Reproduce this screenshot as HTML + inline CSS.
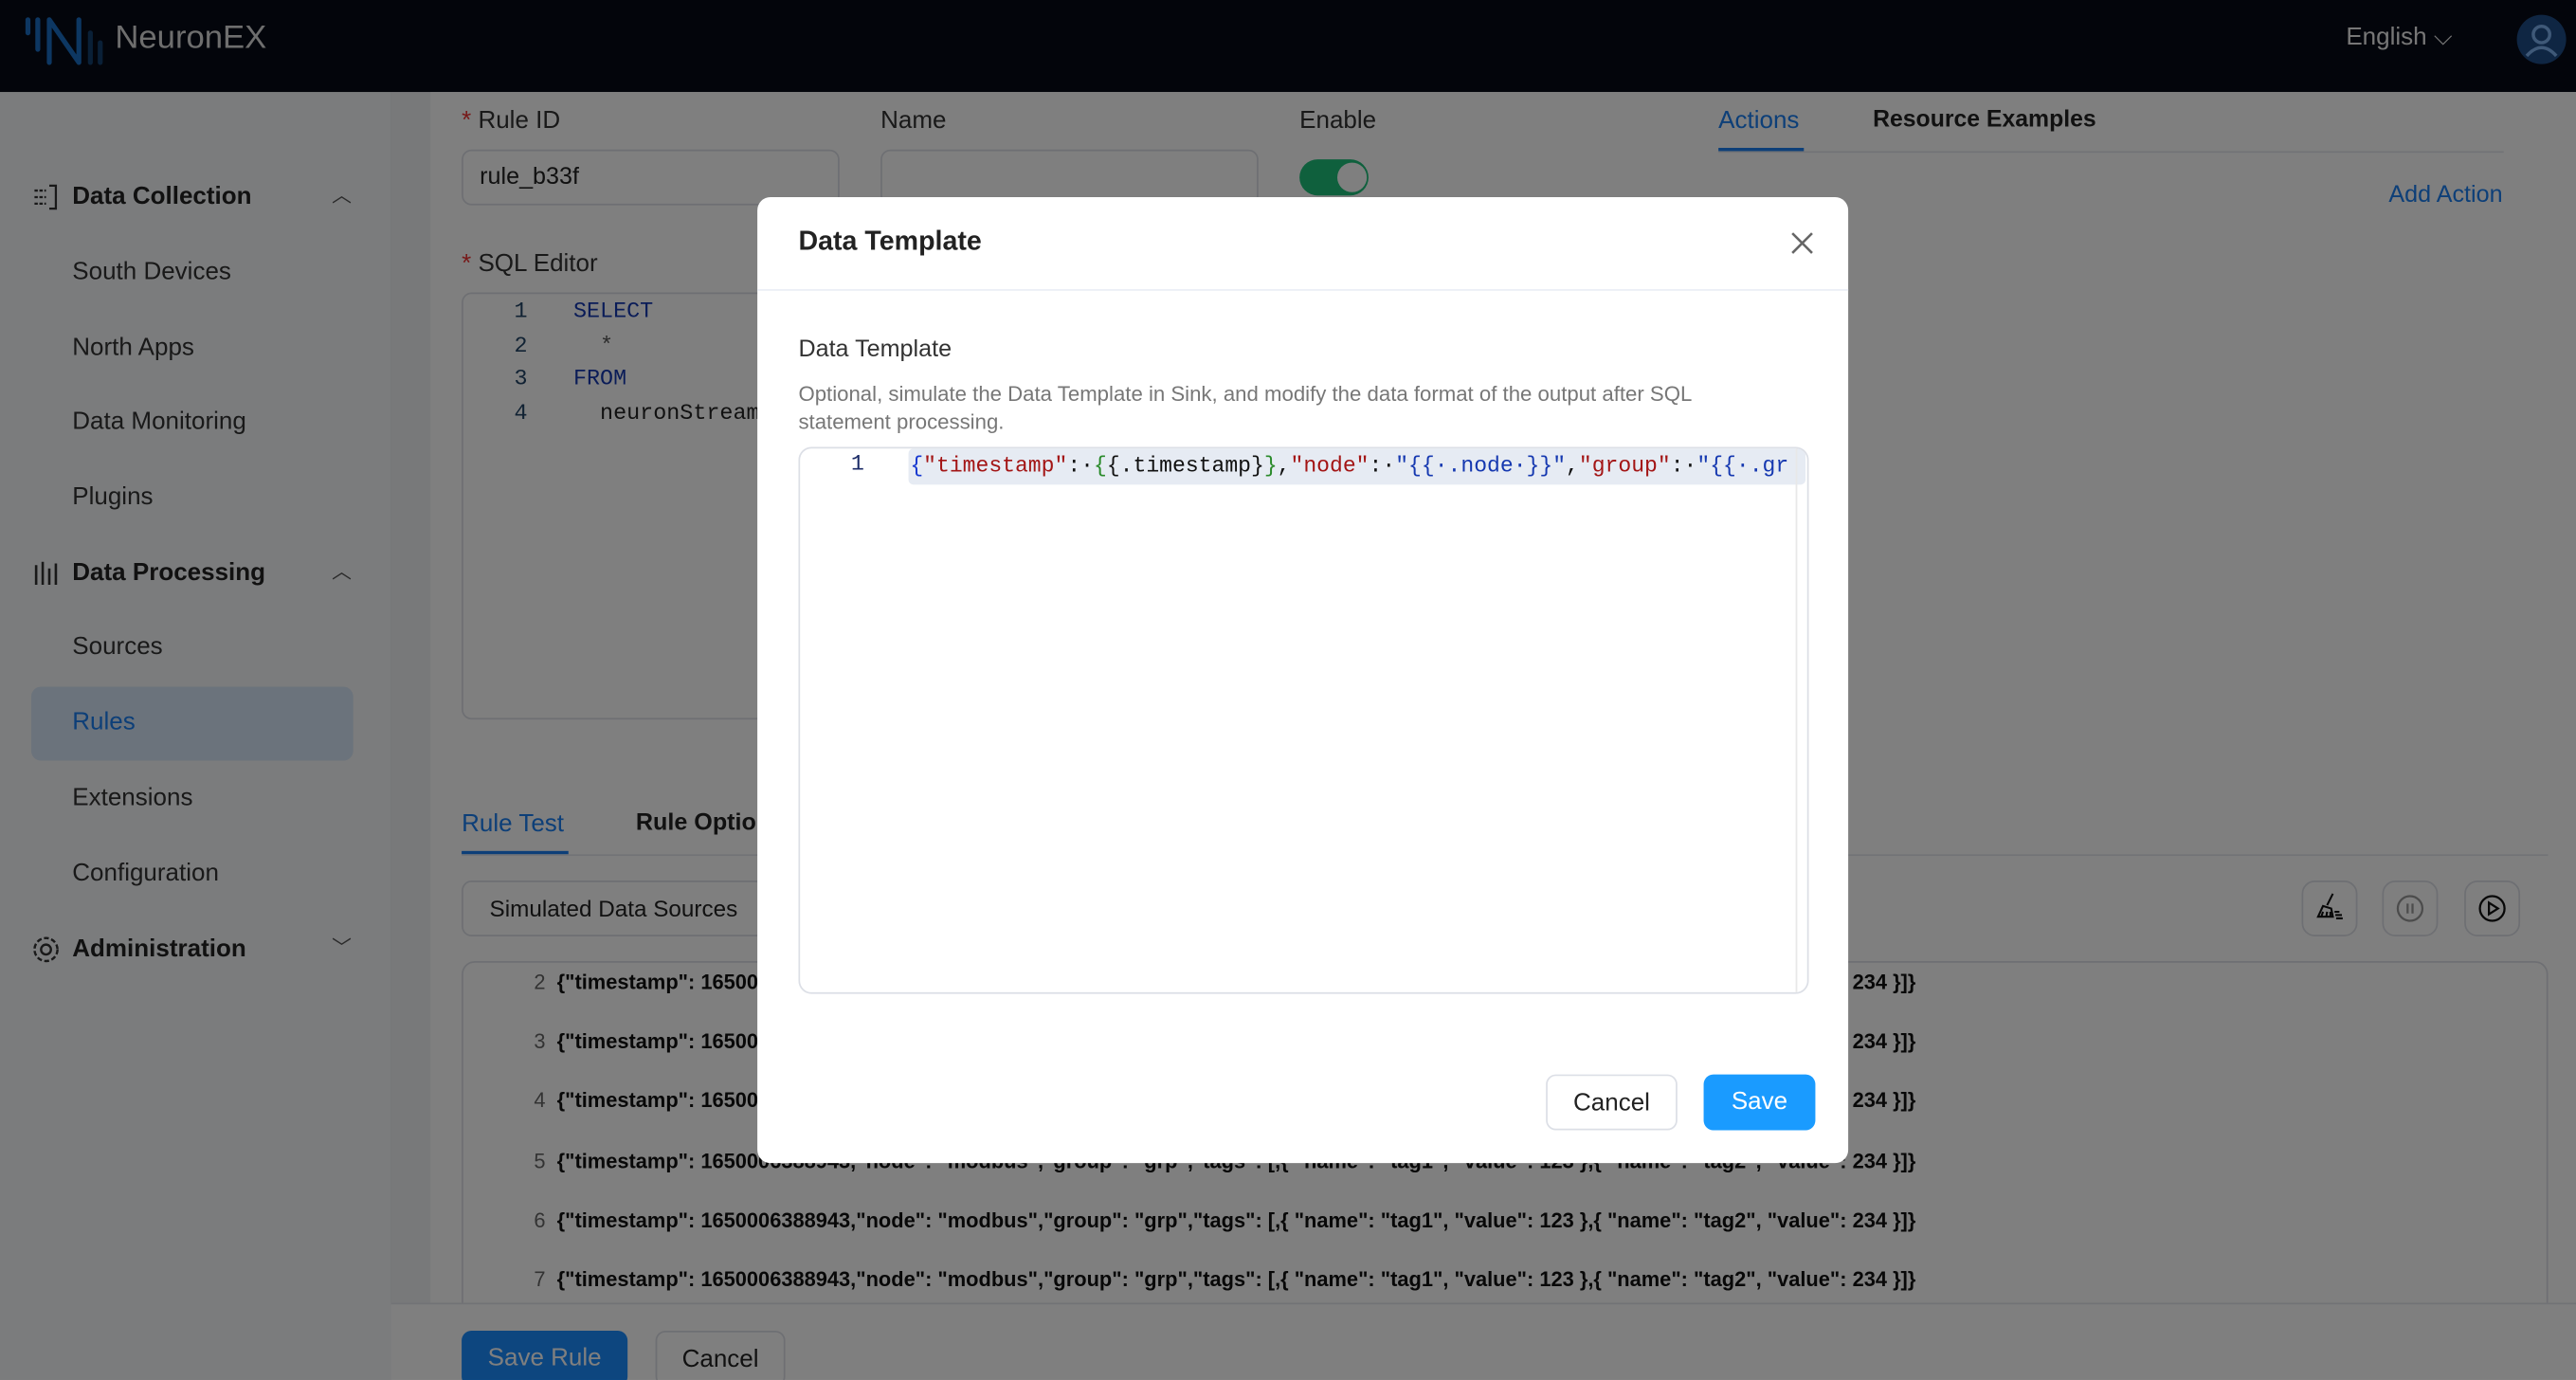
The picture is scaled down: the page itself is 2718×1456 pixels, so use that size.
<!DOCTYPE html>
<html><head><meta charset="utf-8"><style>
*{box-sizing:border-box;margin:0;padding:0}
html,body{width:2718px;height:1456px;overflow:hidden;background:#7e7e7e}
#w{width:1568px;height:840px;transform:scale(1.73342,1.7333);transform-origin:0 0;position:relative;font-family:"Liberation Sans",sans-serif;color:#222}
.a{position:absolute}
.hdr{left:0;top:0;width:1568px;height:56px;background:#070b17}
.side{left:0;top:56px;width:238px;height:784px;background:#f6f8fb}
.main{left:238px;top:56px;width:1330px;height:784px;background:#f0f2f5}
.card{left:262px;top:56px;width:1306px;height:740px;background:#fff}
.nav{font-size:15px;color:#333;left:44px}
.grp{font-size:15px;font-weight:bold;color:#222;left:44px}
.lbl{font-size:15px;color:#333}
.inp{border:1px solid #dcdfe6;border-radius:6px;background:#fff}
.mono{font-family:"Liberation Mono",monospace}
.row{left:322px;font-size:12.6px;font-weight:bold;color:#111;white-space:nowrap}
.row span{display:inline-block;width:10px;text-align:right;font-weight:normal;color:#666;margin-right:7px}
.ov{left:0;top:0;width:1568px;height:840px;background:rgba(0,0,0,.5)}
.modal{left:461px;top:120px;width:664px;height:588px;background:#fff;border-radius:8px}
.btn{border-radius:6px;font-size:15px;text-align:center;line-height:34px;height:34px}
</style></head><body><div id="w">
<div class="a hdr"></div>
<svg class="a" style="left:14px;top:8px" width="50" height="36" viewBox="0 0 50 36"><g stroke="#1a6fc4" stroke-width="3" stroke-linecap="round" fill="none"><line x1="3" y1="4" x2="3" y2="12"/><line x1="9" y1="4" x2="9" y2="22"/><path d="M16 4 V30 M16 4 L34 30 M34 4 V30" stroke-linejoin="round"/></g><g stroke="#14406e" stroke-width="3" stroke-linecap="round"><line x1="41" y1="12" x2="41" y2="30"/><line x1="47" y1="18" x2="47" y2="30"/></g></svg>
<div class="a" style="left:70px;top:12px;font-size:20px;color:#ddd">NeuronEX</div>
<div class="a" style="left:1428px;top:14px;font-size:15px;color:#eee">English ⌵</div>
<svg class="a" style="left:1531px;top:8px" width="32" height="32"><circle cx="16" cy="16" r="15" fill="#1f4c86"/><circle cx="16" cy="13" r="5" fill="none" stroke="#7fb2f0" stroke-width="2"/><path d="M7 26 Q16 16 25 26" fill="none" stroke="#7fb2f0" stroke-width="2"/></svg>

<div class="a side"></div>
<div class="a main"></div>
<div class="a card"></div>

<svg class="a" style="left:19px;top:111px" width="18" height="18"><g stroke="#333" stroke-width="1.3" fill="none"><path d="M11 2h4v14h-4"/><path d="M2 5h7M2 9h7M2 13h7" stroke-dasharray="2 1"/></g></svg>
<div class="a grp" style="top:111px">Data Collection</div>
<div class="a" style="left:202px;top:110px;font-size:12px;color:#555">︿</div>
<div class="a nav" style="top:157px">South Devices</div>
<div class="a nav" style="top:203px">North Apps</div>
<div class="a nav" style="top:248px">Data Monitoring</div>
<div class="a nav" style="top:294px">Plugins</div>
<svg class="a" style="left:19px;top:340px" width="18" height="18"><g stroke="#333" stroke-width="1.5"><path d="M3 4v12M7 2v14M11 6v10M15 3v13"/></g></svg>
<div class="a grp" style="top:340px">Data Processing</div>
<div class="a" style="left:202px;top:339px;font-size:12px;color:#555">︿</div>
<div class="a nav" style="top:385px">Sources</div>
<div class="a" style="left:19px;top:418px;width:196px;height:45px;background:#d7e6f8;border-radius:6px"></div>
<div class="a nav" style="top:431px;color:#1a7ef0">Rules</div>
<div class="a nav" style="top:477px">Extensions</div>
<div class="a nav" style="top:523px">Configuration</div>
<svg class="a" style="left:19px;top:569px" width="18" height="18"><circle cx="9" cy="9" r="3" fill="none" stroke="#333" stroke-width="1.4"/><circle cx="9" cy="9" r="7" fill="none" stroke="#333" stroke-width="1.4" stroke-dasharray="3 1.5"/></svg>
<div class="a grp" style="top:569px">Administration</div>
<div class="a" style="left:202px;top:568px;font-size:12px;color:#555">﹀</div>

<div class="a lbl" style="left:281px;top:65px"><span style="color:#e33">*</span> Rule ID</div>
<div class="a inp" style="left:281px;top:91px;width:230px;height:34px"></div>
<div class="a" style="left:292px;top:100px;font-size:14.5px">rule_b33f</div>
<div class="a lbl" style="left:536px;top:65px">Name</div>
<div class="a inp" style="left:536px;top:91px;width:230px;height:34px"></div>
<div class="a lbl" style="left:791px;top:65px">Enable</div>
<div class="a" style="left:791px;top:97px;width:42px;height:22px;border-radius:11px;background:#1fc07a"></div>
<div class="a" style="left:814px;top:99px;width:18px;height:18px;border-radius:9px;background:#fff"></div>
<div class="a" style="left:1046px;top:65px;font-size:15px;color:#1a7ef0">Actions</div>
<div class="a" style="left:1046px;top:90px;width:52px;height:2px;background:#1a7ef0"></div>
<div class="a" style="left:1140px;top:65px;font-size:14.3px;font-weight:bold">Resource Examples</div>
<div class="a" style="left:1046px;top:92px;width:478px;height:1px;background:#e4e7ed"></div>
<div class="a" style="left:1454px;top:111px;font-size:14.5px;color:#1a7ef0">Add Action</div>

<div class="a lbl" style="left:281px;top:152px"><span style="color:#e33">*</span> SQL Editor</div>
<div class="a inp" style="left:281px;top:178px;width:200px;height:260px"></div>
<div class="a mono" style="left:313px;top:181px;font-size:13.5px;line-height:20.7px;color:#246">1<br>2<br>3<br>4</div>
<div class="a mono" style="left:349px;top:181px;font-size:13.5px;line-height:20.7px;color:#1538b0">SELECT<br>&nbsp;&nbsp;<span style="color:#555">*</span><br>FROM<br>&nbsp;&nbsp;<span style="color:#222">neuronStream</span></div>

<div class="a" style="left:281px;top:493px;font-size:15px;color:#1a7ef0">Rule Test</div>
<div class="a" style="left:281px;top:518px;width:65px;height:2px;background:#1a7ef0"></div>
<div class="a" style="left:387px;top:493px;font-size:14.5px;font-weight:bold">Rule Options</div>
<div class="a" style="left:281px;top:520px;width:1270px;height:1px;background:#e4e7ed"></div>
<div class="a inp" style="left:281px;top:536px;width:200px;height:34px"></div>
<div class="a" style="left:298px;top:545px;font-size:14px">Simulated Data Sources</div>
<div class="a inp" style="left:1401px;top:536px;width:34px;height:34px;border-radius:8px"></div>
<svg class="a" style="left:1408px;top:542px" width="20" height="22"><g stroke="#111" stroke-width="1.2" fill="none"><path d="M12 2L8.5 9"/><path d="M6 9.5l5 1.5 1 5H3z"/><path d="M5 16l1-3M8 16l0.5-3M10.5 16l0-3"/><path d="M13 13h3M13.5 15h4M14 17h4"/></g></svg>
<div class="a inp" style="left:1450px;top:536px;width:34px;height:34px;border-radius:8px"></div>
<svg class="a" style="left:1458px;top:544px" width="18" height="18"><circle cx="9" cy="9" r="7.5" fill="none" stroke="#999" stroke-width="1.3"/><path d="M7.5 6v6M10.5 6v6" stroke="#999" stroke-width="1.3"/></svg>
<div class="a inp" style="left:1500px;top:536px;width:34px;height:34px;border-radius:8px"></div>
<svg class="a" style="left:1508px;top:544px" width="18" height="18"><circle cx="9" cy="9" r="7.5" fill="none" stroke="#111" stroke-width="1.3"/><path d="M7 5.5v7l5.5-3.5z" fill="none" stroke="#111" stroke-width="1.3"/></svg>
<div class="a inp" style="left:281px;top:585px;width:1270px;height:220px;border-radius:8px"></div>
<div class="a row" style="top:591px"><span>2</span>{"timestamp": 1650006388943,"node": "modbus","group": "grp","tags": [,{ "name": "tag1", "value": 123 },{ "name": "tag2", "value": 234 }]}</div>
<div class="a row" style="top:627px"><span>3</span>{"timestamp": 1650006388943,"node": "modbus","group": "grp","tags": [,{ "name": "tag1", "value": 123 },{ "name": "tag2", "value": 234 }]}</div>
<div class="a row" style="top:663px"><span>4</span>{"timestamp": 1650006388943,"node": "modbus","group": "grp","tags": [,{ "name": "tag1", "value": 123 },{ "name": "tag2", "value": 234 }]}</div>
<div class="a row" style="top:700px"><span>5</span>{"timestamp": 1650006388943,"node": "modbus","group": "grp","tags": [,{ "name": "tag1", "value": 123 },{ "name": "tag2", "value": 234 }]}</div>
<div class="a row" style="top:736px"><span>6</span>{"timestamp": 1650006388943,"node": "modbus","group": "grp","tags": [,{ "name": "tag1", "value": 123 },{ "name": "tag2", "value": 234 }]}</div>
<div class="a row" style="top:772px"><span>7</span>{"timestamp": 1650006388943,"node": "modbus","group": "grp","tags": [,{ "name": "tag1", "value": 123 },{ "name": "tag2", "value": 234 }]}</div>
<div class="a" style="left:238px;top:793px;width:1330px;height:47px;background:#fff;border-top:1px solid #e4e7ed"></div>
<div class="a btn" style="left:281px;top:810px;width:101px;background:#1a8cff;color:#fff">Save Rule</div>
<div class="a btn inp" style="left:399px;top:810px;width:79px">Cancel</div>

<div class="a ov"></div>

<div class="a modal"></div>
<div class="a" style="left:486px;top:138px;font-size:16.5px;font-weight:bold;color:#222">Data Template</div>
<svg class="a" style="left:1089px;top:140px" width="16" height="16"><path d="M2 2L14 14M14 2L2 14" stroke="#666" stroke-width="1.5"/></svg>
<div class="a" style="left:461px;top:176px;width:664px;height:1px;background:#ebeef5"></div>
<div class="a" style="left:486px;top:205px;font-size:14.5px;color:#333">Data Template</div>
<div class="a" style="left:486px;top:231px;width:600px;font-size:12.8px;line-height:17px;color:#777">Optional, simulate the Data Template in Sink, and modify the data format of the output after SQL statement processing.</div>
<div class="a" style="left:486px;top:272px;width:615px;height:333px;border:1px solid #dcdfe6;border-radius:8px;background:#fff;overflow:hidden">
<div class="a" style="left:66px;top:0;width:546px;height:22px;background:#e6ebf3;border-radius:3px"></div>
<div class="a" style="left:606px;top:0;width:1px;height:333px;background:#e8e8e8"></div>
<div class="a mono" style="left:31px;top:3px;font-size:13.5px;color:#1a2a66">1</div>
<div class="a mono" style="left:67px;top:3px;font-size:13.3px;white-space:nowrap;color:#111"><span style="color:#1538d0">{</span><span style="color:#a31515">"timestamp"</span>:·<span style="color:#2a8a2a">{</span>{.timestamp}<span style="color:#2a8a2a">}</span>,<span style="color:#a31515">"node"</span>:·<span style="color:#1538b0">"{{·.node·}}"</span>,<span style="color:#a31515">"group"</span>:·<span style="color:#1538b0">"{{·.gr</span></div>
</div>
<div class="a btn" style="left:941px;top:654px;width:80px;border:1px solid #dcdfe6;color:#222">Cancel</div>
<div class="a btn" style="left:1037px;top:654px;width:68px;background:#1a9bff;color:#fff">Save</div>
</div></body></html>
